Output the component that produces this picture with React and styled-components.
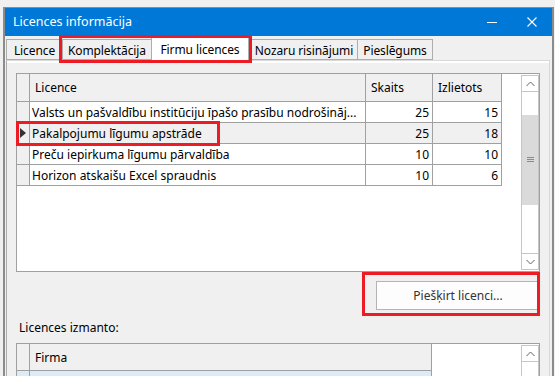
import styled, { createGlobalStyle } from "styled-components";

const Global = createGlobalStyle`
  html, body {
    margin: 0;
    background: #f0f0f0;
    overflow: hidden;
  }
  body {
    font-family: "Noto Sans", "Open Sans", sans-serif;
    font-size: 12px;
    color: #000;
  }
`;

const Window = styled.div`
  margin: 7px 0 0 3px;
  width: 547px;
  height: 380px;
  border: 1px solid #8c8c8c;
  border-right-width: 2px;
  border-left-width: 2px;
  background: #f0f0f0;
  display: flex;
  flex-direction: column;
`;

const TitleBar = styled.div`
  height: 28px;
  background: #0078d7;
  color: #fff;
  display: flex;
  align-items: center;
  padding-left: 8px;
  font-size: 12.5px;
`;

const Title = styled.div`
  flex: 1;
  padding-bottom: 1px;
`;

const TitleBtn = styled.div`
  width: 40px;
  height: 28px;
  display: flex;
  align-items: center;
  justify-content: center;
`;

const Body = styled.div`
  flex: 1;
  padding: 0 2px 0 1px;
  display: flex;
  flex-direction: column;
`;

const TabRow = styled.div`
  display: flex;
  align-items: flex-end;
  height: 24px;
  position: relative;
  z-index: 1;
`;

const Tab = styled.div`
  width: ${(p) => p.$w}px;
  height: ${(p) => (p.$active ? 25 : 21)}px;
  box-sizing: border-box;
  margin-bottom: ${(p) => (p.$active ? -1 : 0)}px;
  border: 1px solid #adadad;
  border-bottom: ${(p) => (p.$active ? "none" : "1px solid #adadad")};
  background: ${(p) => (p.$active ? "#fff" : "#f0f0f0")};
  display: flex;
  align-items: center;
  justify-content: center;
  padding-top: ${(p) => (p.$active ? 0 : 1)}px;
  white-space: nowrap;
  font-size: 12px;
  letter-spacing: -0.1px;
  position: relative;
  z-index: ${(p) => (p.$active ? 2 : 0)};
  & + & {
    margin-left: -1px;
  }
`;

const Mark = styled.div`
  position: absolute;
  inset: ${(p) => p.$inset};
  border: 3px solid #ed1c24;
  pointer-events: none;
  z-index: 5;
`;

const MarkWrap = styled.div`
  display: flex;
  align-items: flex-end;
  position: relative;
  margin: 0 ${(p) => p.$gap || 0}px 0 -1px;
`;

const Panel = styled.div`
  flex: 1;
  border: 1px solid #d9d9d9;
  border-left-color: #adadad;
  background: #f0f0f0;
  box-shadow: inset 0 2px 0 #fff;
  padding: 12px 9px 0 9px;
  display: flex;
  flex-direction: column;
`;

const Grid = styled.div`
  height: ${(p) => p.$h}px;
  border: 1px solid #a0a0a0;
  background: #fff;
  display: flex;
  box-sizing: border-box;
`;

const GridBody = styled.div`
  flex: 1;
  display: grid;
  grid-template-columns: ${(p) => p.$cols};
  grid-auto-rows: min-content;
  align-content: start;
`;

const HeadCell = styled.div`
  height: ${(p) => p.$h || 28}px;
  box-sizing: border-box;
  background: #f0f0f0;
  border-right: 1px solid #a0a0a0;
  border-bottom: 1px solid #a0a0a0;
  padding-left: 5px;
  display: flex;
  align-items: center;
  white-space: nowrap;
  overflow: hidden;
`;

const Cell = styled.div`
  height: 21px;
  box-sizing: border-box;
  background: ${(p) => (p.$sel ? "#f0f0f0" : "#fff")};
  border-right: 1px solid #a0a0a0;
  border-bottom: 1px solid #a0a0a0;
  padding: 0 3px 0 2px;
  display: flex;
  align-items: center;
  justify-content: ${(p) => (p.$num ? "flex-end" : "flex-start")};
  white-space: nowrap;
  overflow: hidden;
  position: relative;
`;

const Indicator = styled(Cell)`
  padding: 0;
  justify-content: center;
  background: #f0f0f0;
  overflow: visible;
`;

const BlueCell = styled.div`
  height: 10px;
  background: #dcebf8;
  border-right: 1px solid #a0a0a0;
`;

const Scroll = styled.div`
  width: 18px;
  margin: 1px 0 1px 0;
  display: flex;
  flex-direction: column;
`;

const ScrollBtn = styled.div`
  height: 17px;
  box-sizing: border-box;
  border: 1px solid #c6c6c6;
  display: flex;
  align-items: center;
  justify-content: center;
  background: #fff;
`;

const Track = styled.div`
  flex: 1;
  border-left: 1px solid #c6c6c6;
  border-right: 1px solid #c6c6c6;
  padding-top: ${(p) => p.$top}px;
`;

const Thumb = styled.div`
  height: ${(p) => p.$h}px;
  background: #dadada;
  display: flex;
  align-items: center;
  justify-content: center;
`;

const Actions = styled.div`
  display: flex;
  justify-content: flex-end;
  padding: 9px 0 0 0;
`;

const Button = styled.div`
  width: 164px;
  height: 29px;
  box-sizing: border-box;
  border: 1px solid #b4b4b4;
  background: #fdfdfd;
  color: #333;
  display: flex;
  align-items: center;
  justify-content: center;
  font-size: 12px;
`;

const Label = styled.div`
  padding: 9px 0 7px 3px;
  font-size: 12px;
`;

const Chevron = ({ up }) => (
  <svg width="9" height="6" viewBox="0 0 9 6">
    <path
      d={up ? "M0.5 5 L4.5 1 L8.5 5" : "M0.5 1 L4.5 5 L8.5 1"}
      fill="none"
      stroke="#606060"
      strokeWidth="1"
    />
  </svg>
);

const Grip = () => (
  <svg width="7" height="6" viewBox="0 0 7 6">
    <path d="M0 0.5 H7 M0 2.5 H7 M0 4.5 H7" stroke="#8a8a8a" strokeWidth="1" />
  </svg>
);

const Scrollbar = ({ top, thumb }) => (
  <Scroll>
    <ScrollBtn>
      <Chevron up />
    </ScrollBtn>
    <Track $top={top}>
      {thumb && (
        <Thumb $h={thumb}>
          <Grip />
        </Thumb>
      )}
    </Track>
    {thumb && (
      <ScrollBtn>
        <Chevron />
      </ScrollBtn>
    )}
  </Scroll>
);

const licences = [
  { name: "Valsts un pašvaldību institūciju īpašo prasību nodrošināj...", count: 25, used: 15 },
  { name: "Pakalpojumu līgumu apstrāde", count: 25, used: 18, sel: true },
  { name: "Preču iepirkuma līgumu pārvaldība", count: 10, used: 10 },
  { name: "Horizon atskaišu Excel spraudnis", count: 10, used: 6 },
];

export default function App() {
  return (
    <>
      <Global />
      <Window>
        <TitleBar>
          <Title>Licences informācija</Title>
          <TitleBtn>
            <svg width="10" height="10" viewBox="0 0 10 10">
              <path d="M0 5.5 H10" stroke="#fff" strokeWidth="1" />
            </svg>
          </TitleBtn>
          <TitleBtn>
            <svg width="10" height="10" viewBox="0 0 10 10">
              <path d="M0.5 0.5 L9.5 9.5 M9.5 0.5 L0.5 9.5" stroke="#fff" strokeWidth="1.1" />
            </svg>
          </TitleBtn>
        </TitleBar>
        <Body>
          <TabRow>
            <Tab $w={57}>Licence</Tab>
            <MarkWrap $gap={1}>
              <Tab $w={90}>Komplektācija</Tab>
              <Tab $w={98} $active>Firmu licences</Tab>
              <Mark $inset="-1px -3px -3px -3px" />
            </MarkWrap>
            <Tab $w={108}>Nozaru risinājumi</Tab>
            <Tab $w={76}>Pieslēgums</Tab>
          </TabRow>
          <Panel>
            <Grid $h={199}>
              <GridBody $cols="13px 336px 67px 69px">
                <HeadCell />
                <HeadCell>Licence</HeadCell>
                <HeadCell>Skaits</HeadCell>
                <HeadCell>Izlietots</HeadCell>
                {licences.map((l) => (
                  <>
                    <Indicator key={l.name + "i"}>
                      {l.sel && (
                        <svg width="6" height="10" viewBox="0 0 6 10">
                          <path d="M0 0 L6 5 L0 10 Z" fill="#333" />
                        </svg>
                      )}
                      {l.sel && <Mark $inset="-2px -191px -3px -1px" />}
                    </Indicator>
                    <Cell key={l.name} $sel={l.sel}>{l.name}</Cell>
                    <Cell key={l.name + "c"} $sel={l.sel} $num>{l.count}</Cell>
                    <Cell key={l.name + "u"} $sel={l.sel} $num>{l.used}</Cell>
                  </>
                ))}
              </GridBody>
              <Scrollbar top={23} thumb={90} />
            </Grid>
            <Actions>
              <MarkWrap>
                <Button>Piešķirt licenci...</Button>
                <Mark $inset="-9px 0 -6px -14px" />
              </MarkWrap>
            </Actions>
            <Label>Licences izmanto:</Label>
            <Grid $h={60}>
              <GridBody $cols="13px 402px">
                <HeadCell $h={27} />
                <HeadCell $h={27}>Firma</HeadCell>
                <BlueCell />
                <BlueCell />
              </GridBody>
              <Scrollbar />
            </Grid>
          </Panel>
        </Body>
      </Window>
    </>
  );
}
